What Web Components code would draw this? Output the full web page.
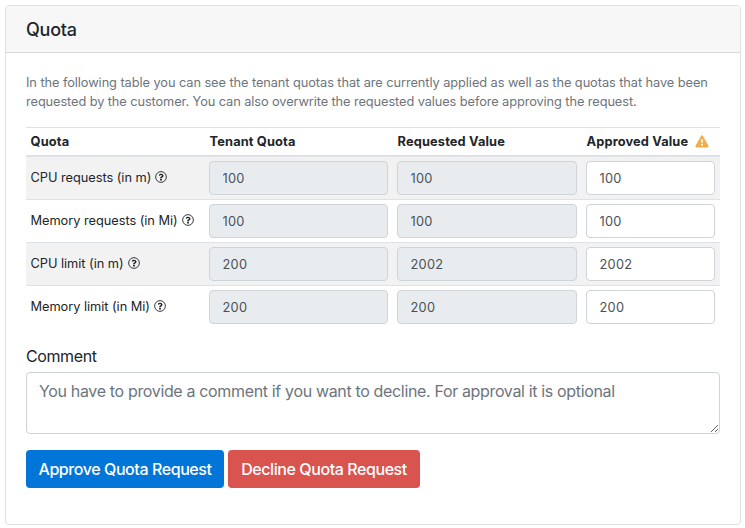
<!DOCTYPE html>
<html lang="en">
<head>
<meta charset="utf-8">
<title>Quota</title>
<style>
html,body{margin:0;height:100%;background:#fff;overflow:hidden}
body{font:400 16px/24px Inter,"Liberation Sans",sans-serif;color:#212529;padding:5px 4px 3px 5px;box-sizing:border-box}
</style>
</head>
<body>
<quota-card heading="Quota">
  <p slot="intro">In the following table you can see the tenant quotas that are currently applied as well as the quotas that have been<br><span style="letter-spacing:-.095px">requested by the customer. You can also overwrite the requested values before approving the request.</span></p>
  <quota-table>
    <quota-row label="CPU requests (in m)" tenant="100" requested="100" approved="100" striped></quota-row>
    <quota-row label="Memory requests (in Mi)" tenant="100" requested="100" approved="100"></quota-row>
    <quota-row label="CPU limit (in m)" tenant="200" requested="2002" approved="2002" striped></quota-row>
    <quota-row label="Memory limit (in Mi)" tenant="200" requested="200" approved="200"></quota-row>
  </quota-table>
  <comment-field label="Comment" placeholder="You have to provide a comment if you want to decline. For approval it is optional"></comment-field>
  <div slot="actions">
    <action-button style="--w:198px">Approve Quota Request</action-button>
    <action-button kind="danger" style="--w:192px">Decline Quota Request</action-button>
  </div>
</quota-card>
<script>
class Base extends HTMLElement {
  connectedCallback() {
    if (this.shadowRoot) return;
    this.attachShadow({mode: 'open'}).innerHTML = this.view();
  }
  a(name) { return this.getAttribute(name) || ''; }
}
customElements.define('quota-card', class extends Base {
  view() { return `<style>
    :host{display:flex;flex-direction:column;box-sizing:border-box;width:736px;height:520px;border:1px solid #dfdfdf;border-radius:4px;background:#fff}
    header{flex:none;height:46px;background:#f7f7f7;border-bottom:1px solid #d9d9d9;border-radius:3px 3px 0 0;padding:0 20px;display:flex;align-items:center}
    h1{margin:2px 0 0;font-size:18px;line-height:24px;font-weight:550;letter-spacing:-.25px}
    main{padding:20px}
    ::slotted([slot=intro]){margin:0 0 16px;font-size:12.8px;line-height:19.2px;color:#6c757d;white-space:nowrap;letter-spacing:-.073px}
    ::slotted([slot=actions]){display:flex;gap:4px;margin-top:16px}
  </style><header><h1>${this.a('heading')}</h1></header>
  <main><slot name="intro"></slot><slot></slot><slot name="actions"></slot></main>`; }
});
customElements.define('quota-table', class extends Base {
  view() { return `<style>
    :host{display:block;width:694px;font-size:12.8px;line-height:19px}
    .head{display:grid;grid-template-columns:179px 188px 189px 138px;height:27px;border-top:1px solid #dee2e6;border-bottom:2px solid #dee2e6;font-weight:700;align-items:center;letter-spacing:.14px}
    .head>span{padding-left:4.6px;display:flex;align-items:center;white-space:nowrap}
    svg{margin-left:7px}
  </style><div class="head"><span>Quota</span><span>Tenant Quota</span><span>Requested Value</span><span>Approved Value
  <svg width="14" height="13" viewBox="0 0 14 13"><path d="M6 1.1Q7-.4 8 1.1L13.3 10.6Q14 12.3 12.4 12.4H1.6Q0 12.3.7 10.6Z" fill="#f0ad4e"/><path d="M6.1 4.3h1.8l-.3 3.6H6.4z" fill="#fff"/><circle cx="7" cy="9.8" r="1" fill="#fff"/></svg></span></div><slot></slot>`; }
});
customElements.define('help-icon', class extends Base {
  view() { return `<style>:host{display:inline-flex}</style><svg width="12" height="12" viewBox="0 0 512 512" fill="currentColor"><circle cx="256" cy="256" r="229" fill="none" stroke="currentColor" stroke-width="38"/><path d="M363.244 200.8c0 67.052-72.421 68.084-72.421 92.863V300c0 6.627-5.373 12-12 12h-45.647c-6.627 0-12-5.373-12-12v-8.659c0-35.745 27.1-50.034 47.579-61.516 17.561-9.845 28.324-16.541 28.324-29.579 0-17.246-21.999-28.693-39.784-28.693-23.189 0-33.894 10.977-48.942 29.969-4.057 5.12-11.46 6.071-16.666 2.124l-27.824-21.098c-5.107-3.872-6.251-11.066-2.644-16.363C184.846 131.491 214.94 112 261.794 112c49.071 0 101.45 38.304 101.45 88.8zM298 368c0 23.159-18.841 42-42 42s-42-18.841-42-42 18.841-42 42-42 42 18.841 42 42z"/></svg>`; }
});
customElements.define('quota-row', class extends Base {
  view() { return `<style>
    :host{display:grid;grid-template-columns:179px 188px 189px 138px;height:42px;border-bottom:1px solid #dee2e6}
    :host([striped]){background:#f2f2f2}
    :host(:last-of-type){border-bottom:0}
    .label{padding:11px 0 0 4.5px;display:flex;align-items:center;height:19px;gap:4px;white-space:nowrap;letter-spacing:-.04px}
    help-icon{margin-top:-1px}
    .cell{padding:4px 5px 0 4px}
    input{display:block;box-sizing:border-box;width:100%;height:34px;margin:0;padding:0 12.5px;border:1px solid #ced4da;border-radius:4px;background:#fff;color:#495057;font:inherit;font-size:12.8px;letter-spacing:.25px}
    input[readonly]{background:#e9ecef}
  </style><div class="label"><span>${this.a('label')}</span><help-icon></help-icon></div>
  <div class="cell"><input readonly value="${this.a('tenant')}"></div>
  <div class="cell"><input readonly value="${this.a('requested')}"></div>
  <div class="cell"><input value="${this.a('approved')}"></div>`; }
});
customElements.define('comment-field', class extends Base {
  view() { return `<style>
    :host{display:block;margin-top:16px}
    label{display:block;margin-bottom:4px;letter-spacing:-.4px}
    textarea{display:block;box-sizing:border-box;width:694px;height:62px;margin:0;padding:6px 12px;border:1px solid #ced4da;border-radius:4px;background:#fff;font:inherit;letter-spacing:-.345px;resize:vertical}
    textarea::placeholder{color:#6c757d;opacity:1}
  </style><label for="c">${this.a('label')}</label><textarea id="c" placeholder="${this.a('placeholder')}"></textarea>`; }
});
customElements.define('action-button', class extends Base {
  view() { return `<style>
    :host{display:block;width:var(--w)}
    button{width:100%;height:38px;border:0;border-radius:4px;padding:0;background:#0275d8;color:#fff;font:inherit;font-weight:500;letter-spacing:-.42px;white-space:nowrap}
    :host([kind=danger]) button{background:#d9534f}
  </style><button type="button"><slot></slot></button>`; }
});
</script>
</body>
</html>
